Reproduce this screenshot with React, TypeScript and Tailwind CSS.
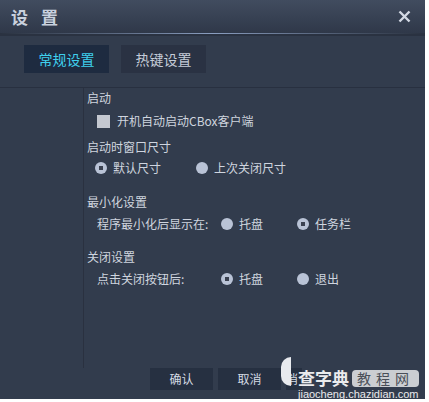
import React from "react";

const font = { fontFamily: '"Noto Sans CJK SC", "Noto Sans", sans-serif' };

function Radio({ checked }: { checked?: boolean }) {
  return (
    <span className="relative inline-flex h-[12px] w-[12px] items-center justify-center rounded-full bg-[#b9c3d6]">
      {checked && <span className="h-[4px] w-[4px] bg-[#3a4150]" />}
    </span>
  );
}

export default function App() {
  return (
    <div className="h-[402px] w-[429px] bg-white" style={font}>
      <div className="flex h-[399px] w-[425px] flex-col bg-[#323c4d]">
        {/* Title bar */}
        <div className="flex h-[33px] items-center justify-between bg-gradient-to-b from-[#414c5f] to-[#2f3849] pl-[11px] pr-[14px]">
          <span className="text-[17px] font-bold tracking-[13px] text-[#c9d1de]">设置</span>
          <svg width="13" height="13" viewBox="0 0 13 13">
            <path d="M1.5 1.5 L11.5 11.5 M11.5 1.5 L1.5 11.5" stroke="#d3d9e4" strokeWidth="2.4" />
          </svg>
        </div>
        <div className="h-[1px] bg-gradient-to-r from-[#2a3240] via-[#8a9ec0] to-[#2a3240]" />
        <div className="h-[2px] bg-[#2a3241]" />
        {/* Tabs */}
        <div className="flex gap-[12px] pl-[24px] pt-[9px]">
          <div className="flex h-[28px] w-[85px] items-center justify-center bg-[#1e2b40] text-[14px] text-[#3fd0ee]">常规设置</div>
          <div className="flex h-[28px] w-[85px] items-center justify-center bg-[#2a3243] text-[14px] text-[#c5ccd8]">热键设置</div>
        </div>
        {/* Content */}
        <div className="mt-[14px] flex flex-1 border-t border-[#283040]">
          <div className="w-[84px] shrink-0 border-r border-[#2a3140]" />
          <div className="flex flex-col pl-[3px] text-[12px] text-[#cfd5df]">
            <div className="h-[20px] leading-[20px]">启动</div>
            <div className="mt-[6px] flex h-[14px] items-center gap-[7px] pl-[10px]">
              <span className="h-[13px] w-[13px] bg-[#c4c8d0]" />
              <span>开机自动启动CBox客户端</span>
            </div>
            <div className="mt-[9px] h-[20px] leading-[20px]">启动时窗口尺寸</div>
            <div className="mt-[1px] flex h-[20px] items-center pl-[8px]">
              <Radio checked />
              <span className="ml-[6px] w-[83px]">默认尺寸</span>
              <Radio />
              <span className="ml-[6px]">上次关闭尺寸</span>
            </div>
            <div className="mt-[14px] h-[20px] leading-[20px]">最小化设置</div>
            <div className="mt-[2px] flex h-[20px] items-center pl-[10px]">
              <span className="w-[124px]">程序最小化后显示在:</span>
              <Radio />
              <span className="ml-[6px] w-[58px]">托盘</span>
              <Radio checked />
              <span className="ml-[6px]">任务栏</span>
            </div>
            <div className="mt-[13px] h-[20px] leading-[20px]">关闭设置</div>
            <div className="mt-[2px] flex h-[20px] items-center pl-[10px]">
              <span className="w-[124px]">点击关闭按钮后:</span>
              <Radio checked />
              <span className="ml-[6px] w-[58px]">托盘</span>
              <Radio />
              <span className="ml-[6px]">退出</span>
            </div>
          </div>
        </div>
        {/* Buttons */}
        <div className="relative flex h-[31px] items-start gap-[5px] pl-[150px]">
          <div className="flex h-[22px] w-[63px] items-center justify-center bg-[#263041] text-[12px] text-[#d5dbe4]">确认</div>
          <div className="flex h-[22px] w-[63px] items-center justify-center bg-[#263041] text-[12px] text-[#d5dbe4]">取消</div>
          <div className="flex h-[22px] w-[16px] items-center overflow-hidden bg-[#263041] text-[12px] text-[#d5dbe4]">消</div>
          {/* watermark */}
          <div className="absolute left-[281px] top-[-11px] h-[29px] w-[10px] rounded-l-full bg-[#e8eaee]" />
          <div className="absolute left-[298px] top-[1px] flex flex-col items-start">
            <div className="flex h-[18px] items-center gap-[3px]">
              <span className="text-[17px] font-bold leading-[18px] text-white/90">查字典</span>
              <span className="rounded-[4px] bg-white/75 px-[5px] text-[14px] leading-[17px] tracking-[5px] text-[#4a4f58]">教程网</span>
            </div>
            <span className="mt-[2px] text-[11px] leading-[10px] text-white/90" style={{ fontFamily: '"Liberation Sans", sans-serif' }}>jiaocheng.chazidian.com</span>
          </div>
        </div>
      </div>
    </div>
  );
}
